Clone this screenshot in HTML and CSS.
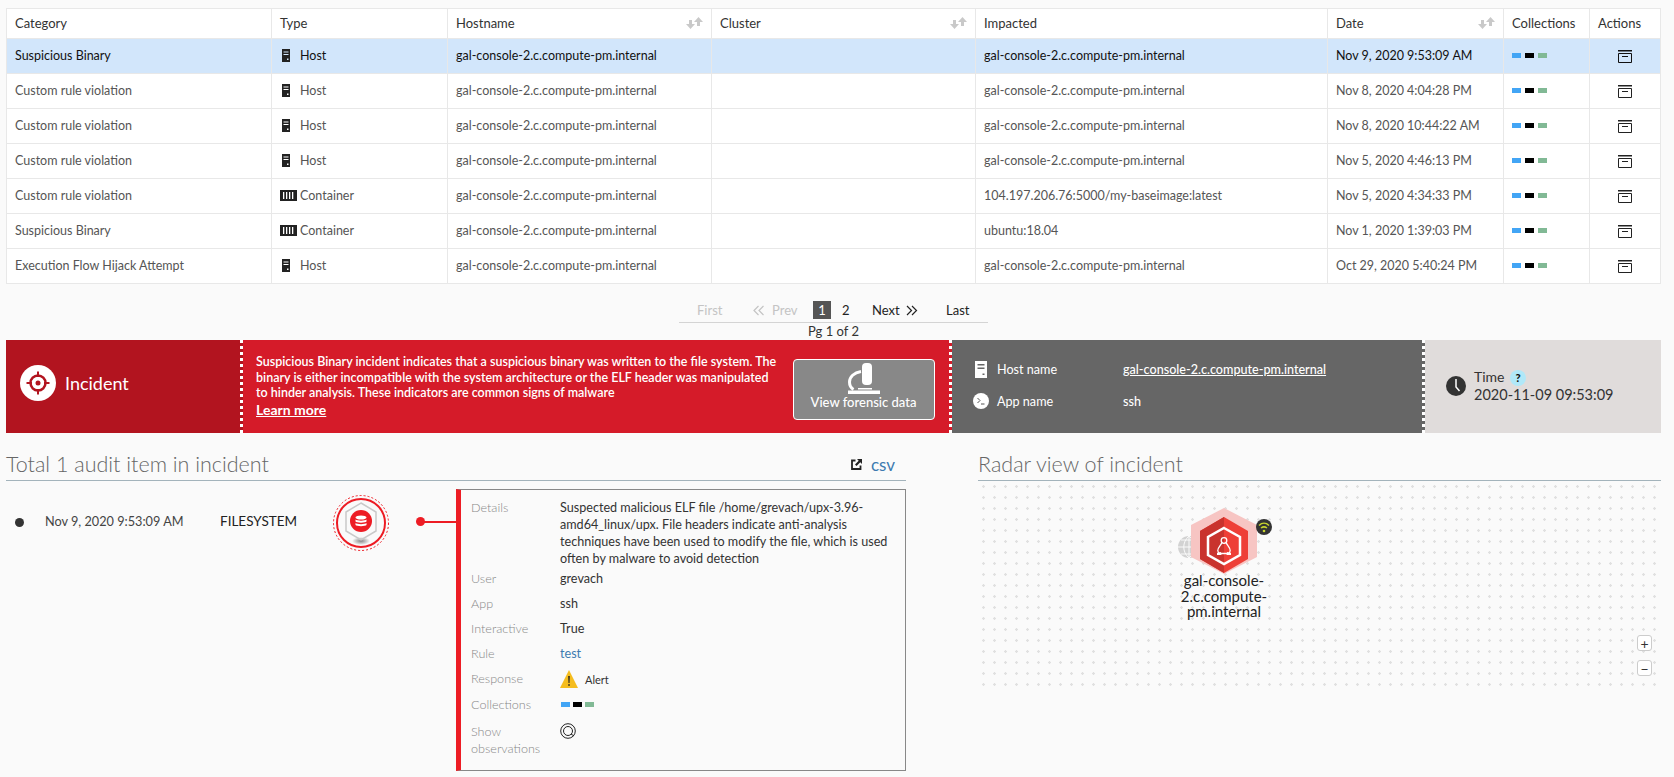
FILE: index.html
```html
<!DOCTYPE html>
<html lang="en">
<head>
  <meta charset="UTF-8" />
  <title>Incidents</title>
  <link rel="stylesheet" href="styles.css">
</head>
<body>
  <svg class="defs" width="0" height="0">
    <symbol id="i-host" viewBox="0 0 8 13"><path fill="currentColor" fill-rule="evenodd" d="M0 0h8v13H0zM1.500 2.500v1h5v-1zM1.500 5v1h5V5zM5 9.500v1.500h1.500V9.500z"/></symbol>
    <symbol id="i-container" viewBox="0 0 17 11"><path fill="currentColor" fill-rule="evenodd" d="M0 0h17v11H0zM3 2v7h1.300V2zM6 2v7h1.300V2zM9 2v7h1.300V2zM12 2v7h1.300V2z"/></symbol>
    <symbol id="i-sort" viewBox="0 0 17 12"><path fill="#c9c9c9" d="M3 3h3v4h3l-4.500 5L0 7h3zM11 9h3V5h3l-4.500-5L8 5h3z"/></symbol>
    <symbol id="i-archive" viewBox="0 0 14 13"><path fill="none" stroke="currentColor" d="M.5 3.500v9h13v-9z"/><path fill="none" stroke="currentColor" stroke-width="1.500" d="M0 .75h14"/><path stroke="currentColor" d="M4 6.500h6"/></symbol>
  </svg>

  <!-- incident list -->
  <table class="grid">
    <colgroup>
      <col class="c1"><col class="c2"><col class="c3"><col class="c3"><col class="c4"><col class="c2"><col class="c5"><col class="c6">
    </colgroup>
    <thead>
      <tr>
        <th>Category</th>
        <th>Type</th>
        <th><span class="th-sort">Hostname <svg class="sort"><use href="#i-sort"/></svg></span></th>
        <th><span class="th-sort">Cluster <svg class="sort"><use href="#i-sort"/></svg></span></th>
        <th>Impacted</th>
        <th><span class="th-sort">Date <svg class="sort"><use href="#i-sort"/></svg></span></th>
        <th>Collections</th>
        <th>Actions</th>
      </tr>
    </thead>
    <tbody>
      <tr class="selected">
        <td>Suspicious Binary</td>
        <td><span class="type"><span class="type-icon"><svg class="host"><use href="#i-host"/></svg></span>Host</span></td>
        <td>gal-console-2.c.compute-pm.internal</td>
        <td></td>
        <td>gal-console-2.c.compute-pm.internal</td>
        <td>Nov 9, 2020 9:53:09 AM</td>
        <td><span class="bars"><i class="b1"></i><i class="b2"></i><i class="b3"></i></span></td>
        <td class="act"><svg class="archive"><use href="#i-archive"/></svg></td>
      </tr>
      <tr>
        <td>Custom rule violation</td>
        <td><span class="type"><span class="type-icon"><svg class="host"><use href="#i-host"/></svg></span>Host</span></td>
        <td>gal-console-2.c.compute-pm.internal</td>
        <td></td>
        <td>gal-console-2.c.compute-pm.internal</td>
        <td>Nov 8, 2020 4:04:28 PM</td>
        <td><span class="bars"><i class="b1"></i><i class="b2"></i><i class="b3"></i></span></td>
        <td class="act"><svg class="archive"><use href="#i-archive"/></svg></td>
      </tr>
      <tr>
        <td>Custom rule violation</td>
        <td><span class="type"><span class="type-icon"><svg class="host"><use href="#i-host"/></svg></span>Host</span></td>
        <td>gal-console-2.c.compute-pm.internal</td>
        <td></td>
        <td>gal-console-2.c.compute-pm.internal</td>
        <td>Nov 8, 2020 10:44:22 AM</td>
        <td><span class="bars"><i class="b1"></i><i class="b2"></i><i class="b3"></i></span></td>
        <td class="act"><svg class="archive"><use href="#i-archive"/></svg></td>
      </tr>
      <tr>
        <td>Custom rule violation</td>
        <td><span class="type"><span class="type-icon"><svg class="host"><use href="#i-host"/></svg></span>Host</span></td>
        <td>gal-console-2.c.compute-pm.internal</td>
        <td></td>
        <td>gal-console-2.c.compute-pm.internal</td>
        <td>Nov 5, 2020 4:46:13 PM</td>
        <td><span class="bars"><i class="b1"></i><i class="b2"></i><i class="b3"></i></span></td>
        <td class="act"><svg class="archive"><use href="#i-archive"/></svg></td>
      </tr>
      <tr>
        <td>Custom rule violation</td>
        <td><span class="type"><span class="type-icon"><svg class="box"><use href="#i-container"/></svg></span>Container</span></td>
        <td>gal-console-2.c.compute-pm.internal</td>
        <td></td>
        <td>104.197.206.76:5000/my-baseimage:latest</td>
        <td>Nov 5, 2020 4:34:33 PM</td>
        <td><span class="bars"><i class="b1"></i><i class="b2"></i><i class="b3"></i></span></td>
        <td class="act"><svg class="archive"><use href="#i-archive"/></svg></td>
      </tr>
      <tr>
        <td>Suspicious Binary</td>
        <td><span class="type"><span class="type-icon"><svg class="box"><use href="#i-container"/></svg></span>Container</span></td>
        <td>gal-console-2.c.compute-pm.internal</td>
        <td></td>
        <td>ubuntu:18.04</td>
        <td>Nov 1, 2020 1:39:03 PM</td>
        <td><span class="bars"><i class="b1"></i><i class="b2"></i><i class="b3"></i></span></td>
        <td class="act"><svg class="archive"><use href="#i-archive"/></svg></td>
      </tr>
      <tr>
        <td>Execution Flow Hijack Attempt</td>
        <td><span class="type"><span class="type-icon"><svg class="host"><use href="#i-host"/></svg></span>Host</span></td>
        <td>gal-console-2.c.compute-pm.internal</td>
        <td></td>
        <td>gal-console-2.c.compute-pm.internal</td>
        <td>Oct 29, 2020 5:40:24 PM</td>
        <td><span class="bars"><i class="b1"></i><i class="b2"></i><i class="b3"></i></span></td>
        <td class="act"><svg class="archive"><use href="#i-archive"/></svg></td>
      </tr>
    </tbody>
  </table>

  <!-- pagination -->
  <div class="pager">
    <div class="pager-links">
      <span class="off first">First</span>
      <span class="off prev"><svg class="chev"><path d="M5.500 1L1 5.500 5.500 10M10.500 1L6 5.500 10.500 10"/></svg>Prev</span>
      <span class="page-on">1</span>
      <span class="page-two">2</span>
      <span class="next">Next<svg class="chev"><path d="M1 1l4.500 4.500L1 10M6 1l4.500 4.500L6 10"/></svg></span>
      <span class="last">Last</span>
    </div>
    <div class="pager-count">Pg 1 of 2</div>
  </div>

  <!-- incident banner -->
  <div class="banner">
    <div class="b-title">
      <svg class="target" viewBox="0 0 36 36">
        <circle cx="18" cy="18" r="18" fill="#fff"/>
        <circle cx="18" cy="18" r="7.500" fill="none" stroke="#b2141f" stroke-width="2.500"/>
        <path fill="#b2141f" d="M17 6.500h2V12h-2zM17 24h2v5.500h-2zM6.500 17H12v2H6.500zM24 17h5.500v2H24z"/>
        <circle cx="18" cy="18" r="2.500" fill="#b2141f"/>
      </svg>
      <span>Incident</span>
    </div>
    <div class="b-desc">
      <div class="b-text">
        <p>Suspicious Binary incident indicates that a suspicious binary was written to the file system. The binary is either incompatible with the system architecture or the ELF header was manipulated to hinder analysis. These indicators are common signs of malware</p>
        <a class="learn">Learn more</a>
      </div>
      <button class="forensic">
        <svg class="scope" viewBox="0 0 32 32">
          <rect x="14" y="0" width="10" height="22" rx="4" fill="#fff"/>
          <path fill="none" stroke="#fff" stroke-width="3" d="M13 8.500C6 9.500 1.500 14 1.500 19c0 3 1.500 6 4 7.500"/>
          <path fill="#fff" d="M0 27.500h32V31H0zM10 25h14v1.500H10z"/>
        </svg>
        <span>View forensic data</span>
      </button>
    </div>
    <div class="b-host">
      <div class="b-row">
        <svg class="b-host-icon" viewBox="0 0 12 17"><path fill="#fff" fill-rule="evenodd" d="M0 0h12v17H0zM2.500 3v1.500h7V3zM2.500 6.500V8h7V6.500zM7.500 12.500V14h2v-1.500z"/></svg>
        <span class="b-label">Host name</span>
        <a class="b-link">gal-console-2.c.compute-pm.internal</a>
      </div>
      <div class="b-row">
        <svg class="b-term" viewBox="0 0 16 16"><circle cx="8" cy="8" r="8" fill="#fff"/><path fill="none" stroke="#555" d="M4.500 5l2.500 2.500L4.500 10M8 11h3.500"/></svg>
        <span class="b-label">App name</span>
        <span class="b-value">ssh</span>
      </div>
    </div>
    <div class="b-time">
      <svg class="clock" viewBox="0 0 20 20"><circle cx="10" cy="10" r="10" fill="#333"/><path fill="none" stroke="#fff" stroke-width="1.500" d="M10 3v8l3.500 4"/></svg>
      <div>
        <div class="time-label">Time <span class="hint">?</span></div>
        <div>2020-11-09 09:53:09</div>
      </div>
    </div>
  </div>

  <div class="lower">
    <!-- audit items -->
    <section class="audit">
      <div class="sec-head">
        <h2>Total 1 audit item in incident</h2>
        <a class="csv">
          <svg class="ext" viewBox="0 0 11 11"><path fill="none" stroke="#222" stroke-width="1.800" d="M4.500 1.500H1v8.500h8.500V6.500"/><path fill="#222" d="M6 0h5v5L9.300 3.300 5.500 7 4 5.500l3.700-3.800z"/></svg>
          csv
        </a>
      </div>
      <div class="audit-row">
        <div class="audit-meta">
          <i class="bullet"></i>
          <span class="audit-date">Nov 9, 2020 9:53:09 AM</span>
          <span class="audit-kind">FILESYSTEM</span>
          <svg class="fs-badge" viewBox="0 0 58 58">
            <defs><radialGradient id="shade"><stop offset="0" stop-color="#888"/><stop offset="1" stop-color="#fafafa"/></radialGradient></defs>
            <circle cx="29" cy="29" r="27.500" fill="none" stroke="#ed1c24" stroke-dasharray="2 2"/>
            <circle cx="29" cy="29" r="24" fill="#fafafa" stroke="#ed1c24" stroke-width="2"/>
            <ellipse cx="29" cy="47" rx="9" ry="4" fill="url(#shade)"/>
            <path fill="none" stroke="#c9c9c9" stroke-width="1.500" d="M29 9l15 9v19l-15 9-15-9V18z"/>
            <circle cx="29" cy="27" r="11" fill="#ed1c24"/>
            <g fill="#fff">
              <ellipse cx="29" cy="23.500" rx="5.500" ry="2"/>
              <path d="M23.500 25.500c1 1.500 10 1.500 11 0v2c-1 1.500-10 1.500-11 0zM23.500 29c1 1.500 10 1.500 11 0v2c-1 1.500-10 1.500-11 0z"/>
            </g>
          </svg>
          <span class="connector"></span>
        </div>
        <div class="detail">
          <span class="d-key">Details</span>
          <span class="d-long">Suspected malicious ELF file /home/grevach/upx-3.96-amd64_linux/upx. File headers indicate anti-analysis techniques have been used to modify the file, which is used often by malware to avoid detection</span>
          <span class="d-key">User</span>
          <span>grevach</span>
          <span class="d-key">App</span>
          <span>ssh</span>
          <span class="d-key">Interactive</span>
          <span>True</span>
          <span class="d-key">Rule</span>
          <a class="d-link">test</a>
          <span class="d-key">Response</span>
          <span class="alert">
            <svg class="warn" viewBox="0 0 18 18"><path fill="#f5bd1f" d="M9 0l9 18H0z"/><path fill="#222" d="M8.200 6h1.600l-.3 7h-1zM8.200 14.200h1.600v1.600H8.200z"/></svg>
            Alert
          </span>
          <span class="d-key">Collections</span>
          <span class="bars d-bars"><i class="b1"></i><i class="b2"></i><i class="b3"></i></span>
          <span class="d-key d-show">Show observations</span>
          <span class="d-show"><svg class="obs" viewBox="0 0 16 16"><circle cx="8" cy="8" r="7.300" fill="none" stroke="#222"/><circle cx="8" cy="8" r="4.500" fill="none" stroke="#222"/><path stroke="#222" d="M11 11l3 2"/></svg></span>
        </div>
      </div>
    </section>

    <!-- radar -->
    <section class="radar">
      <div class="sec-head">
        <h2>Radar view of incident</h2>
      </div>
      <div class="radar-canvas">
        <div class="node">
          <svg class="node-art" viewBox="0 0 100 76">
            <circle cx="15" cy="43" r="11" fill="#d2d2d2"/>
            <path fill="none" stroke="#fafafa" d="M4 43h22M15 32v22M7 36h16M7 50h16M15 32c-7 6-7 16 0 22M15 32c7 6 7 16 0 22"/>
            <path fill="#f7c5c3" d="M50 4l33 17v32L50 70 17 53V21z"/>
            <path fill="#ee3f37" d="M50 13l24 14v28L50 69 26 55V27z"/>
            <path fill="#c9332d" d="M50 13v56L26 55V27z"/>
            <path fill="none" stroke="#fff" stroke-width="2.500" d="M50 24l16 9v18l-16 9-16-9V33z"/>
            <circle cx="50" cy="36.500" r="2.800" fill="none" stroke="#fff" stroke-width="1.300"/>
            <path fill="none" stroke="#fff" stroke-width="1.300" d="M47.800 38.500c-.5 2.500-4 4.500-4 8 0 1.500.8 2.500 2 3h8.400c1.200-.5 2-1.500 2-3 0-3.500-3.500-5.500-4-8"/>
            <path fill="#fff" d="M43 49l4-1 .5 3H43zM57 49l-4-1-.5 3H57z"/>
            <circle cx="90" cy="23" r="8" fill="#333"/>
            <path fill="none" stroke="#c6d32e" stroke-width="1.500" d="M85 21.500c3-3 7-3 10 0M87 24c2-1.500 4-1.500 6 0"/>
            <circle cx="90" cy="27" r="1.300" fill="#c6d32e"/>
          </svg>
          <div class="node-name">gal-console-2.c.compute-pm.internal</div>
        </div>
        <button class="zoom zoom-in">+</button>
        <button class="zoom zoom-out">&minus;</button>
      </div>
    </section>
  </div>
</body>
</html>
```

FILE: styles.css
```css
:root {
  --texto: #555;
  --escuro: #222;
  --linha: #e8e8e8;
  --regra: #a3b3bb;
  --vermelho: #d51b29;
}

* {
  box-sizing: border-box;
  margin: 0;
  padding: 0;
}

body {
  font-family: Lato, 'Open Sans', sans-serif;
  font-size: 13px;
  background: #fafafa;
  color: var(--escuro);
  padding: 8px 13px 0 6px;
  overflow: hidden;
}

.defs {
  position: absolute;
}

/* table */
.grid {
  width: 1654px;
  table-layout: fixed;
  border-collapse: collapse;
  background: #fff;
}

.c1 { width: 265px; }
.c2 { width: 176px; }
.c3 { width: 264px; }
.c4 { width: 352px; }
.c5 { width: 86px; }
.c6 { width: 71px; }

.grid th,
.grid td {
  border: 1px solid var(--linha);
  padding: 0 8px 2px;
  text-align: left;
  font-weight: 400;
  white-space: nowrap;
}

.grid th {
  height: 30px;
  color: #333;
}

.grid td {
  height: 35px;
  font-size: 12.500px;
  color: var(--texto);
}

.grid .selected td {
  background: #d2e6fb;
  color: #111;
}

.th-sort {
  display: flex;
  justify-content: space-between;
  align-items: center;
}

.sort {
  width: 17px;
  height: 12px;
}

.type {
  display: flex;
  align-items: center;
  gap: 3px;
}

.type-icon {
  width: 17px;
  display: flex;
  color: #222;
}

.host {
  width: 8px;
  height: 13px;
  margin-left: 2px;
}

.box {
  width: 17px;
  height: 11px;
}

.bars {
  display: flex;
  gap: 4px;
}

.bars i {
  width: 9px;
  height: 5px;
}

.b1 { background: #42a5f5; }
.b2 { background: #000; }
.b3 { background: #81b995; }

.grid .act {
  text-align: center;
  color: #222;
}

.archive {
  width: 14px;
  height: 13px;
  display: block;
  margin: 2px auto 0;
}

/* pagination */
.pager {
  width: 309px;
  margin-left: 673px;
  padding-top: 17px;
  height: 56px;
  text-align: center;
}

.pager-links {
  display: flex;
  align-items: center;
  height: 22px;
  padding: 0 0 3px 18px;
  border-bottom: 1px solid #d4d4d4;
  color: #222;
  text-align: left;
}

.off {
  color: #c4c4c4;
}

.chev {
  width: 12px;
  height: 11px;
  fill: none;
  stroke: currentColor;
  stroke-width: 1.200;
}

.first { width: 56px; }

.prev {
  width: 60px;
  display: flex;
  align-items: center;
  gap: 7px;
}

.page-on {
  width: 18px;
  height: 18px;
  line-height: 18px;
  text-align: center;
  background: #555;
  color: #fff;
}

.page-two {
  width: 41px;
  padding-left: 11px;
}

.next {
  width: 74px;
  display: flex;
  align-items: center;
  gap: 6px;
}

.last { width: 30px; }

.pager-count {
  line-height: 16px;
  color: #333;
}

/* banner */
.banner {
  display: flex;
  height: 93px;
  width: 1655px;
  color: #fff;
}

.b-title,
.b-desc,
.b-host {
  position: relative;
}

.b-title {
  width: 237px;
  flex: none;
  background: #b2141f;
  display: flex;
  align-items: center;
  gap: 9px;
  padding: 0 0 7px 14px;
  font-size: 18px;
}

.target {
  width: 36px;
  height: 36px;
}

/* tira pontilhada entre os blocos */
.b-title::after,
.b-desc::after,
.b-host::after {
  content: '';
  position: absolute;
  right: 0;
  top: 0;
  bottom: 0;
  width: 3px;
  background: repeating-linear-gradient(#fff 0 3px, transparent 3px 6px);
}

.b-desc {
  width: 709px;
  flex: none;
  background: var(--vermelho);
  display: flex;
  padding: 14px 0 0 13px;
}

.b-text {
  width: 523px;
  margin-right: 14px;
  flex: none;
  font-size: 12.500px;
  font-weight: 600;
  line-height: 15.500px;
}

.learn {
  display: block;
  margin-top: 1px;
  font-size: 14px;
  font-weight: 700;
  text-decoration: underline;
}

.forensic {
  width: 142px;
  height: 61px;
  margin: 5px 0 0 -0.500px;
  border: 1px solid #fff;
  border-radius: 4px;
  background: #888;
  color: #fff;
  font: 500 13px Lato, sans-serif;
  display: flex;
  flex-direction: column;
  align-items: center;
  padding-top: 3px;
  line-height: 15px;
}

.scope {
  width: 32px;
  height: 32px;
}

.b-host {
  width: 473px;
  flex: none;
  background: #666;
  padding: 13px 0 0 21px;
  font-size: 12.600px;
}

.b-row {
  display: flex;
  align-items: center;
  height: 32px;
}

.b-row svg {
  width: 16px;
  height: 16px;
  flex: none;
}

.b-row .b-host-icon {
  height: 17px;
  width: 12px;
  margin: 0 2px;
}

.b-label {
  width: 126px;
  margin-left: 8px;
}

.b-link {
  text-decoration: underline;
  font-weight: 500;
}

.b-value {
  font-weight: 500;
}

.b-time {
  flex: 1;
  background: #e0dcdb;
  color: #333;
  display: flex;
  align-items: center;
  gap: 8px;
  padding: 0 0 2px 21px;
  font-size: 14.500px;
  line-height: 17px;
}

.clock {
  width: 20px;
  height: 20px;
}

.time-label {
  font-size: 14px;
}

.hint {
  display: inline-block;
  width: 16px;
  height: 16px;
  margin-left: 2px;
  border-radius: 50%;
  background: #b0e8f8;
  color: #111;
  font-size: 11px;
  font-weight: 900;
  line-height: 16px;
  text-align: center;
}

/* lower part */
.lower {
  display: flex;
  gap: 72px;
  width: 1655px;
}

.audit {
  width: 900px;
  flex: none;
}

.radar {
  flex: 1;
}

.sec-head {
  height: 48px;
  padding: 16px 0 1px;
  border-bottom: 1px solid var(--regra);
  display: flex;
  justify-content: space-between;
  align-items: center;
}

.sec-head h2 {
  font-size: 21.500px;
  font-weight: 300;
  color: #666;
  line-height: 30px;
}

.csv {
  display: flex;
  align-items: center;
  gap: 9px;
  font-size: 17px;
  color: #3d7ab0;
  margin-right: 11px;
}

.ext {
  width: 11px;
  height: 11px;
}

.audit-row {
  display: flex;
  padding-top: 8px;
}

.audit-meta {
  width: 450px;
  flex: none;
  height: 64px;
  display: flex;
  align-items: flex-start;
  padding-left: 9px;
}

.bullet {
  width: 9px;
  height: 9px;
  border-radius: 50%;
  background: #333;
  margin-top: 29px;
}

.audit-date {
  width: 175px;
  margin-left: 21px;
  margin-top: 24px;
  line-height: 17px;
  font-size: 12.700px;
  color: #444;
}

.audit-kind {
  width: 112px;
  margin-top: 24px;
  line-height: 17px;
  font-size: 13.500px;
}

.fs-badge {
  width: 58px;
  height: 58px;
  margin-top: 5px;
  flex: none;
}

.connector {
  width: 36px;
  height: 2px;
  margin: 32px 0 0 30px;
  background: #ed1c24;
  position: relative;
}

.connector::before {
  content: '';
  position: absolute;
  left: -4px;
  top: -4px;
  width: 9px;
  height: 9px;
  border-radius: 50%;
  background: #ed1c24;
}

.detail {
  width: 450px;
  height: 282px;
  border: 1px solid #888;
  border-left: 5px solid #ed1c24;
  padding: 9px 14px 0 10px;
  display: grid;
  grid-template-columns: 89px 1fr;
  grid-auto-rows: min-content;
  gap: 8px 0;
  line-height: 17px;
  font-size: 12.600px;
  color: #333;
}

.d-key {
  color: #888;
  font-weight: 300;
}

.d-long {
  margin-bottom: -5px;
}

.d-show {
  margin-top: 2px;
}

.d-link {
  color: #3d7ab0;
}

.alert {
  display: flex;
  align-items: center;
  gap: 7px;
  font-size: 11px;
  height: 18px;
}

.warn {
  width: 18px;
  height: 18px;
}

.d-bars {
  align-items: center;
  gap: 3px;
  height: 17px;
  padding-left: 1px;
}

.obs {
  width: 16px;
  height: 16px;
  display: block;
}

.radar-canvas {
  position: relative;
  height: 213px;
  background-image: radial-gradient(circle, #e0e0e0 1px, transparent 1.500px);
  background-size: 11px 11px;
}

.node {
  position: absolute;
  left: 196px;
  top: 23px;
  width: 100px;
  text-align: center;
}

.node-art {
  width: 100px;
  height: 76px;
  display: block;
}

.node-name {
  font-size: 15px;
  line-height: 15.500px;
  margin-top: -7px;
  color: #222;
}

.zoom {
  position: absolute;
  left: 659px;
  width: 15px;
  height: 16px;
  border: 1px solid #ccc;
  border-radius: 3px;
  background: #fff;
  color: #333;
  font: 14px/13px Lato, sans-serif;
}

.zoom-in { top: 154px; }
.zoom-out { top: 179px; }
```
